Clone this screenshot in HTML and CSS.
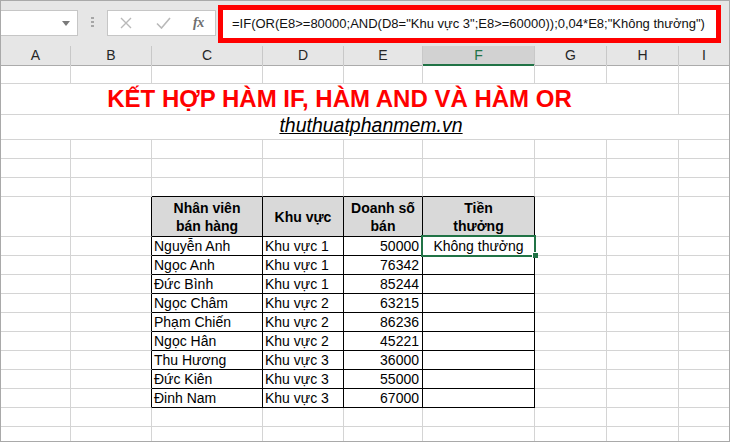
FILE: index.html
```html
<!DOCTYPE html>
<html lang="vi">
<head>
<meta charset="utf-8">
<title>Kết hợp hàm IF, AND và OR</title>
<link rel="stylesheet" href="styles.css">
</head>
<body>
<div class="app">
  <div class="toolbar">
    <div class="namebox">
      <svg class="caret" width="8" height="5" viewBox="0 0 8 5"><polygon points="0,0 8,0 4,5" fill="#7a7a7a"/></svg>
    </div>
    <div class="grip"><span></span><span></span><span></span></div>
    <div class="fxbox">
      <svg class="ico-x" width="12" height="12" viewBox="0 0 12 12"><path d="M1 1 L11 11 M11 1 L1 11" stroke="#b9b9b9" stroke-width="1.4" fill="none"/></svg>
      <svg class="ico-ok" width="15" height="12" viewBox="0 0 15 12"><path d="M1 6.5 L5.5 11 L14 1" stroke="#b9b9b9" stroke-width="1.6" fill="none"/></svg>
      <span class="ico-fx">fx</span>
    </div>
    <div class="formula">=IF(OR(E8&gt;=80000;AND(D8="Khu vực 3";E8&gt;=60000));0,04*E8;"Không thưởng")</div>
  </div>

  <div class="row colhead">
    <div class="h">A</div><div class="h">B</div><div class="h">C</div><div class="h">D</div><div class="h">E</div><div class="h active">F</div><div class="h">G</div><div class="h">H</div><div class="h last">I</div>
  </div>

  <div class="row"><div class="c"></div><div class="c"></div><div class="c"></div><div class="c"></div><div class="c"></div><div class="c"></div><div class="c"></div><div class="c"></div><div class="c last"></div></div>

  <div class="row r-title">
    <div class="c title">KẾT HỢP HÀM IF, HÀM AND VÀ HÀM OR</div><div class="c last"></div>
  </div>

  <div class="row r-site">
    <div class="c site last"><span>thuthuatphanmem.vn</span></div>
  </div>

  <div class="row"><div class="c"></div><div class="c"></div><div class="c"></div><div class="c"></div><div class="c"></div><div class="c"></div><div class="c"></div><div class="c"></div><div class="c last"></div></div>
  <div class="row"><div class="c"></div><div class="c"></div><div class="c"></div><div class="c"></div><div class="c"></div><div class="c"></div><div class="c"></div><div class="c"></div><div class="c last"></div></div>
  <div class="row"><div class="c"></div><div class="c"></div><div class="c tt"></div><div class="c tt"></div><div class="c tt"></div><div class="c tt"></div><div class="c"></div><div class="c"></div><div class="c last"></div></div>

  <div class="row r-head">
    <div class="c"></div><div class="c tl"></div>
    <div class="c t th">Nhân viên<br>bán hàng</div>
    <div class="c t th">Khu vực</div>
    <div class="c t th">Doanh số<br>bán</div>
    <div class="c t th">Tiền<br>thưởng</div>
    <div class="c"></div><div class="c"></div><div class="c last"></div>
  </div>

  <div class="row"><div class="c"></div><div class="c tl"></div><div class="c t">Nguyễn Anh</div><div class="c t">Khu vực 1</div><div class="c t num">50000</div><div class="c t ctr sel">Không thưởng<span class="selbox"></span><span class="handle"></span></div><div class="c"></div><div class="c"></div><div class="c last"></div></div>
  <div class="row"><div class="c"></div><div class="c tl"></div><div class="c t">Ngọc Anh</div><div class="c t">Khu vực 1</div><div class="c t num">76342</div><div class="c t"></div><div class="c"></div><div class="c"></div><div class="c last"></div></div>
  <div class="row"><div class="c"></div><div class="c tl"></div><div class="c t">Đức Bình</div><div class="c t">Khu vực 1</div><div class="c t num">85244</div><div class="c t"></div><div class="c"></div><div class="c"></div><div class="c last"></div></div>
  <div class="row"><div class="c"></div><div class="c tl"></div><div class="c t">Ngọc Châm</div><div class="c t">Khu vực 2</div><div class="c t num">63215</div><div class="c t"></div><div class="c"></div><div class="c"></div><div class="c last"></div></div>
  <div class="row"><div class="c"></div><div class="c tl"></div><div class="c t">Phạm Chiến</div><div class="c t">Khu vực 2</div><div class="c t num">86236</div><div class="c t"></div><div class="c"></div><div class="c"></div><div class="c last"></div></div>
  <div class="row"><div class="c"></div><div class="c tl"></div><div class="c t">Ngọc Hân</div><div class="c t">Khu vực 2</div><div class="c t num">45221</div><div class="c t"></div><div class="c"></div><div class="c"></div><div class="c last"></div></div>
  <div class="row"><div class="c"></div><div class="c tl"></div><div class="c t">Thu Hương</div><div class="c t">Khu vực 3</div><div class="c t num">36000</div><div class="c t"></div><div class="c"></div><div class="c"></div><div class="c last"></div></div>
  <div class="row"><div class="c"></div><div class="c tl"></div><div class="c t">Đức Kiên</div><div class="c t">Khu vực 3</div><div class="c t num">55000</div><div class="c t"></div><div class="c"></div><div class="c"></div><div class="c last"></div></div>
  <div class="row"><div class="c"></div><div class="c tl"></div><div class="c t">Đinh Nam</div><div class="c t">Khu vực 3</div><div class="c t num">67000</div><div class="c t"></div><div class="c"></div><div class="c"></div><div class="c last"></div></div>

  <div class="row"><div class="c"></div><div class="c"></div><div class="c"></div><div class="c"></div><div class="c"></div><div class="c"></div><div class="c"></div><div class="c"></div><div class="c last"></div></div>
  <div class="row r-last"><div class="c"></div><div class="c"></div><div class="c"></div><div class="c"></div><div class="c"></div><div class="c"></div><div class="c"></div><div class="c"></div><div class="c last"></div></div>
</div>
</body>
</html>
```

FILE: styles.css
```css
* { box-sizing: border-box; }

html, body {
  margin: 0;
  padding: 0;
  background: #ffffff;
}

body {
  font-family: "Liberation Sans", Arial, sans-serif;
  color: #000;
}

.app {
  width: 730px;
  height: 442px;
  border: 1px solid #a9a9a9;
  overflow: hidden;
  display: flex;
  flex-direction: column;
  background: #fff;
}

/* ---------- formula toolbar ---------- */
.toolbar {
  flex: none;
  height: 45px;
  background: #e6e6e6;
  display: flex;
  align-items: flex-start;
}

.namebox {
  margin-top: 9px;
  width: 77px;
  height: 26px;
  background: #fff;
  border: 1px solid #c6c6c6;
  border-left: none;
  display: flex;
  align-items: center;
  justify-content: flex-end;
  padding-right: 7px;
}

.grip {
  margin: 16px 0 0 13px;
  width: 3px;
  display: flex;
  flex-direction: column;
  gap: 2px;
}
.grip span {
  display: block;
  width: 3px;
  height: 2px;
  background: #a6a6a6;
}

.fxbox {
  margin: 9px 0 0 13px;
  width: 109px;
  height: 26px;
  background: #fff;
  border: 1px solid #c6c6c6;
  display: flex;
  align-items: center;
}
.ico-x { margin-left: 12px; }
.ico-ok { margin-left: 24px; }
.ico-fx {
  margin-left: 22px;
  font-family: "Liberation Serif", "Times New Roman", serif;
  font-style: italic;
  font-weight: bold;
  font-size: 14px;
  color: #6e6e6e;
  letter-spacing: -0.5px;
}

.formula {
  margin: 4px 0 0 2px;
  width: 503px;
  height: 38px;
  border: 5px solid #ff0000;
  background: #fff;
  padding-left: 9px;
  font-size: 13px;
  line-height: 28px;
  white-space: nowrap;
  color: #111;
}

/* ---------- sheet grid ---------- */
.row {
  flex: none;
  height: 19px;
  display: grid;
  grid-template-columns: 70px 81px 111px 81px 79px 112px 72px 72px 50px;
}
.r-title { height: 31px; }
.r-site  { height: 25px; }
.r-head  { height: 40px; }
.r-last  { height: 14px; }
.r-last .c { border-bottom: none; }

.colhead { background: #e6e6e6; }
.h {
  border-right: 1px solid #c8c8c8;
  border-bottom: 1px solid #ababab;
  text-align: center;
  font-size: 14px;
  line-height: 17px;
  padding-top: 1px;
  color: #262626;
}
.h.active {
  background: #d2d2d2;
  color: #217346;
  border-bottom: 2px solid #217346;
}
.h.last { border-right: none; }

.c {
  border-right: 1px solid #d4d4d4;
  border-bottom: 1px solid #d4d4d4;
  font-size: 14px;
  line-height: 18px;
  padding: 0 2px;
  white-space: nowrap;
}
.c.last { border-right: none; }

.title {
  grid-column: span 8;
  text-align: center;
  color: #ff0000;
  font-weight: bold;
  font-size: 24px;
  line-height: 30px;
}

.site {
  grid-column: span 9;
  text-align: center;
  padding-left: 14px;
  font-size: 19.5px;
  line-height: 20px;
  font-style: italic;
}
.site span { text-decoration: underline; }

/* table borders */
.tt { border-bottom-color: #000; }
.tl { border-right-color: #000; }
.t {
  border-right-color: #000;
  border-bottom-color: #000;
}
.th {
  background: #d9d9d9;
  font-weight: bold;
  text-align: center;
  display: flex;
  align-items: center;
  justify-content: center;
  padding-top: 1px;
}
.num { text-align: right; padding-right: 3px; }
.ctr { text-align: center; }

/* selected cell */
.sel { position: relative; }
.selbox {
  position: absolute;
  left: -2px;
  top: -2px;
  right: -2px;
  bottom: -2px;
  border: 2px solid #217346;
}
.handle {
  position: absolute;
  right: -4px;
  bottom: -3px;
  width: 6px;
  height: 6px;
  background: #217346;
  border-top: 1px solid #fff;
  border-left: 1px solid #fff;
}
```
